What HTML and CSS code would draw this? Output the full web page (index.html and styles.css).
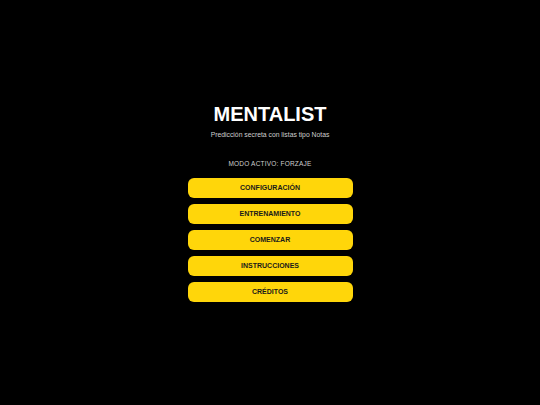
FILE: index.html
```html
<!DOCTYPE html>
<html lang="es">
<head>
<meta charset="utf-8">
<title>Mentalist</title>
<link rel="stylesheet" href="styles.css">
</head>
<body>
<main class="screen">
  <h1 class="title">MENTALIST</h1>
  <p class="subtitle">Predicción secreta con listas tipo Notas</p>
  <p class="mode">MODO ACTIVO: FORZAJE</p>
  <nav class="menu">
    <button class="btn">CONFIGURACIÓN</button>
    <button class="btn">ENTRENAMIENTO</button>
    <button class="btn">COMENZAR</button>
    <button class="btn">INSTRUCCIONES</button>
    <button class="btn">CRÉDITOS</button>
  </nav>
</main>
</body>
</html>
```

FILE: styles.css
```css
html, body {
  margin: 0;
  padding: 0;
  background: #000;
  height: 100%;
}
body {
  font-family: "Liberation Sans", Arial, sans-serif;
  color: #fff;
}
.screen {
  height: 100%;
  display: flex;
  flex-direction: column;
  align-items: center;
  justify-content: center;
}
.title {
  margin: 0;
  font-size: 20px;
  font-weight: 700;
  line-height: 20px;
}
.subtitle {
  margin: 7px 0 0;
  font-size: 6.8px;
  line-height: 8px;
  color: #cfcfcf;
}
.mode {
  margin: 21px 0 0;
  font-size: 6.5px;
  line-height: 8px;
  color: #cfcfcf;
  letter-spacing: 0.2px;
}
.menu {
  margin-top: 10px;
  display: flex;
  flex-direction: column;
  gap: 6px;
  width: 165px;
}
.btn {
  height: 20px;
  border: none;
  border-radius: 6px;
  background: #ffd60a;
  color: #1a1a1a;
  font-family: "Liberation Sans", Arial, sans-serif;
  font-size: 7px;
  font-weight: 700;
  padding: 0;
}
```
